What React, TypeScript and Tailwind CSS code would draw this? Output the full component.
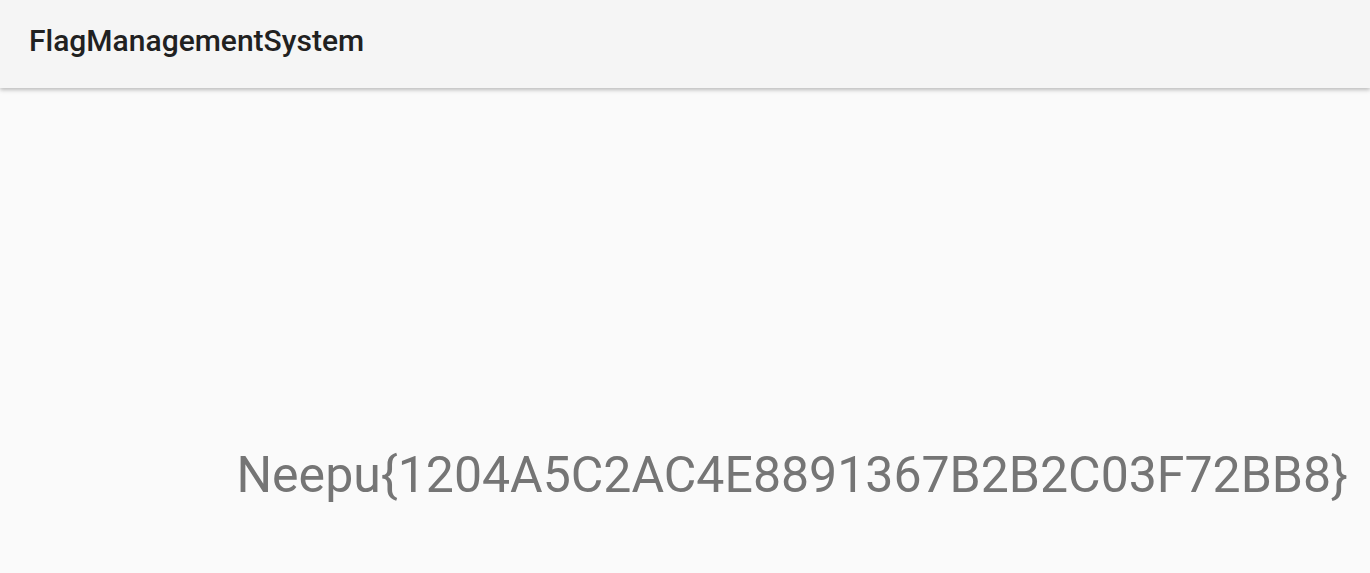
const App = () => {
  return (
    <div className="flex h-[573px] w-full flex-col bg-[#fafafa] font-['Roboto',sans-serif]">
      <header className="relative z-10 flex h-[88px] shrink-0 items-center bg-[#f5f5f5] px-[29px] pb-[6px] shadow-[0_2px_4px_rgba(0,0,0,0.25)]">
        <h1 className="text-[30px] font-medium leading-none text-[#212121]">FlagManagementSystem</h1>
      </header>
      <main className="flex flex-1 items-end justify-end pb-[73px] pr-[22px]">
        <div className="text-[50px] leading-none text-[#757575]">Neepu{"{"}1204A5C2AC4E8891367B2B2C03F72BB8{"}"}</div>
      </main>
    </div>
  );
};

export default App;
